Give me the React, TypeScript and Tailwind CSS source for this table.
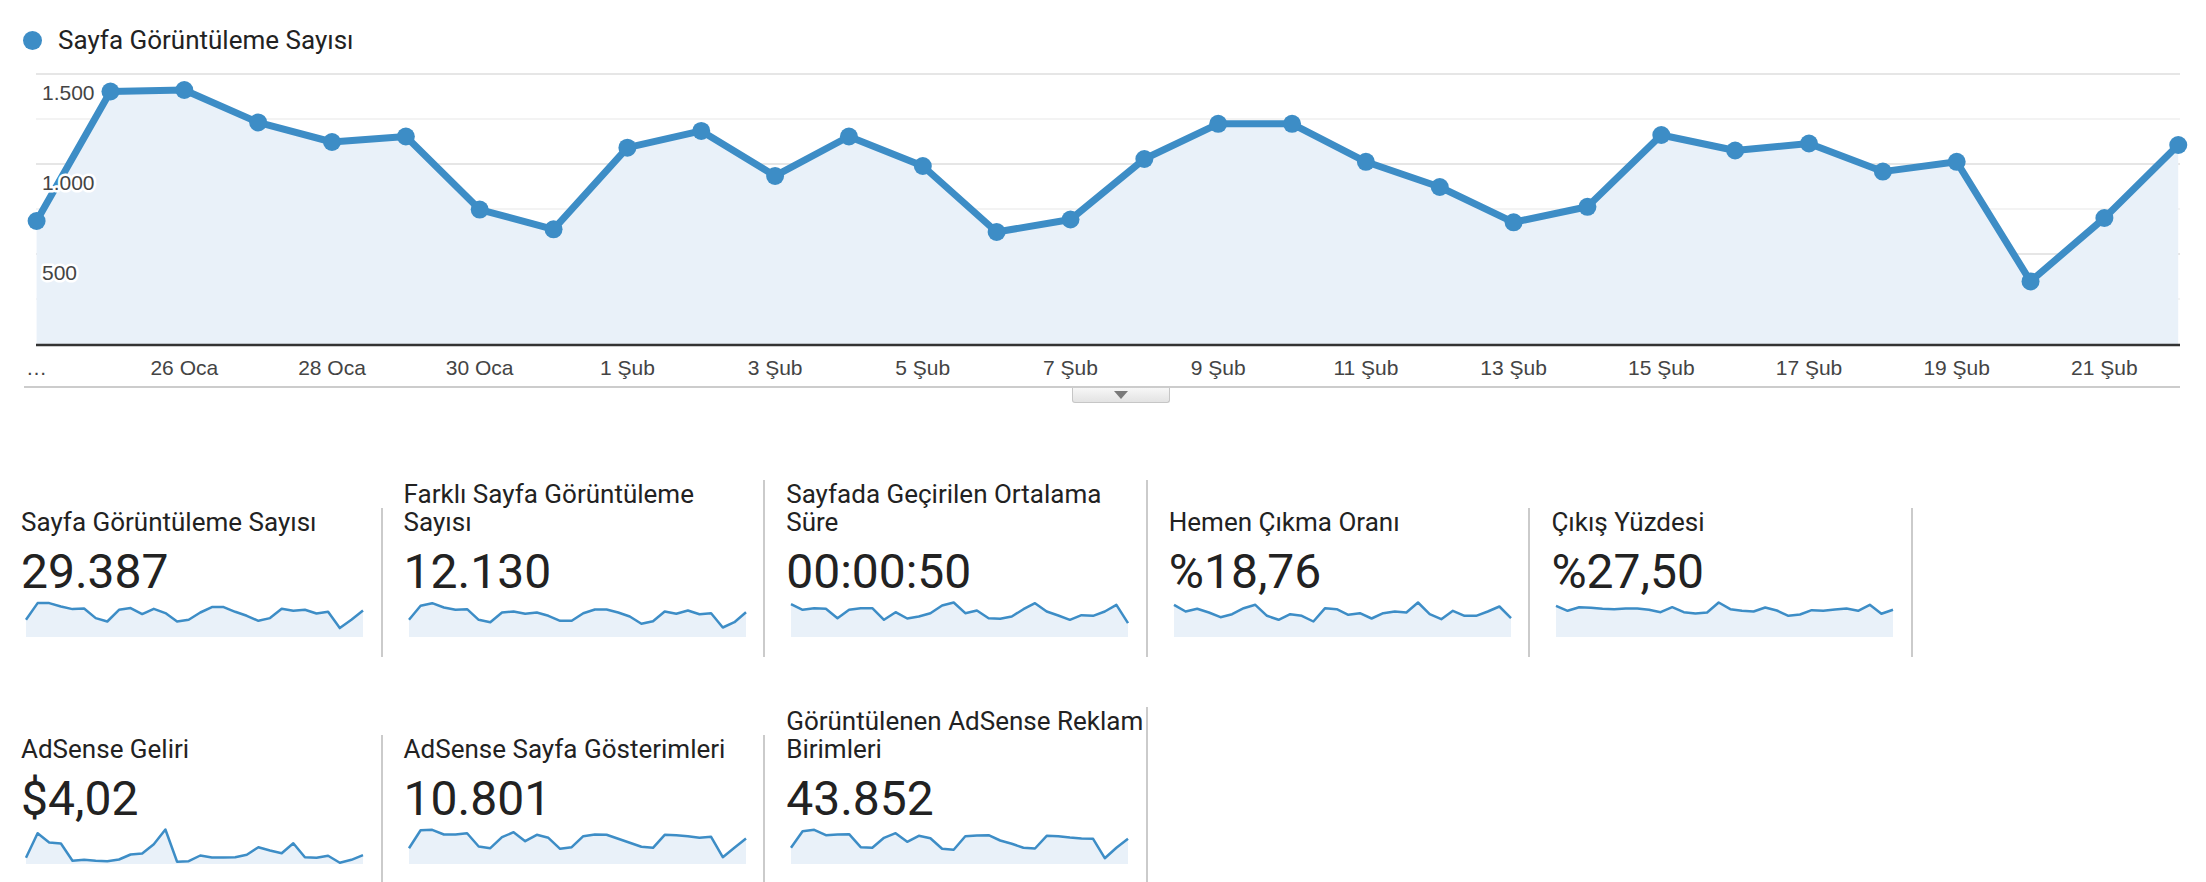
import React from 'react';

const BLUE = '#3d8dc6';
const FILL = '#e9f1f9';

// main chart geometry (page pixels)
const X0 = 36.6;
const DX = 73.85;
const BASE = 344;

const pageViews = [
  221, 91.5, 90, 122.4, 142, 136.5, 209.6, 229.3, 147.7, 130.9, 175.9, 136.5, 166, 232, 219.5,
  159, 123.8, 123.8, 161.8, 187, 222.3, 206.8, 135, 150.5, 143.5, 171.6, 161.8, 281.4, 218, 145,
];

const ticks = [
  '26 Oca', '28 Oca', '30 Oca', '1 Şub', '3 Şub', '5 Şub', '7 Şub',
  '9 Şub', '11 Şub', '13 Şub', '15 Şub', '17 Şub', '19 Şub', '21 Şub',
];

const yLabels = [
  { text: '1.500', y: 100 },
  { text: '1.000', y: 190 },
  { text: '500', y: 280 },
];

interface Metric {
  label: string;
  value: string;
  spark: number[];
}

const row1: Metric[] = [
  {
    label: 'Sayfa Görüntüleme Sayısı',
    value: '29.387',
    spark: [17.3, 0.6, 0.6, 4, 6.6, 6, 15.6, 19, 7.3, 5.6, 11.6, 6.3, 10.6, 19, 17.3, 10, 4.6, 4.6, 9.3, 13.3, 18.3, 15.6, 6.3, 8.3, 7.3, 11, 9.3, 25.6, 17.3, 8],
  },
  {
    label: 'Farklı Sayfa Görüntüleme Sayısı',
    value: '12.130',
    spark: [17.3, 3.3, 0.7, 5, 7.3, 6.7, 17.3, 19.7, 10, 9, 11.3, 10, 13.3, 18.3, 18.3, 10.7, 7, 7, 10, 14, 21.3, 18.7, 9, 11.3, 8, 11.7, 10.7, 25, 19.7, 9.7],
  },
  {
    label: 'Sayfada Geçirilen Ortalama Süre',
    value: '00:00:50',
    spark: [1.7, 7.3, 5.7, 6.3, 15.7, 7.3, 5.7, 5.7, 17.3, 9.7, 16, 14, 10.7, 3, 0, 10.7, 8, 15.7, 16.3, 14, 6.7, 0.7, 9, 13, 17.3, 12.7, 13.3, 9, 2.3, 20.7],
  },
  {
    label: 'Hemen Çıkma Oranı',
    value: '%18,76',
    spark: [2.3, 9, 6.3, 10, 14.7, 11.7, 5.7, 2.3, 13.3, 17.3, 11.7, 13.3, 19, 5.7, 6.7, 12.3, 10.7, 16, 10.7, 9, 10, 0, 11.7, 16.7, 8.3, 13.3, 13.3, 9, 4, 15.7],
  },
  {
    label: 'Çıkış Yüzdesi',
    value: '%27,50',
    spark: [3.3, 8.3, 4.7, 5.3, 6.3, 6.7, 6, 6, 7.3, 9.7, 4.7, 9.7, 11, 10, 0, 6.7, 8.3, 9, 5, 8, 13.3, 12, 7.7, 8.3, 7, 6, 8.3, 2.3, 11.3, 7.3],
  },
];

const row2: Metric[] = [
  {
    label: 'AdSense Geliri',
    value: '$4,02',
    spark: [28.3, 3.7, 13, 14, 31.3, 30.3, 31.3, 31.7, 30, 25, 24, 14.7, 0, 32.3, 31.7, 26, 28, 28, 27.7, 25.3, 17.7, 21, 23.7, 13.7, 27.7, 28.3, 26.3, 33.3, 30.3, 25.7],
  },
  {
    label: 'AdSense Sayfa Gösterimleri',
    value: '10.801',
    spark: [18.7, 0.7, 0.3, 5, 5, 3.7, 17, 18.7, 7.7, 2.7, 11.7, 5.3, 8.3, 19.3, 17.7, 6.7, 5, 5.3, 9.3, 13.3, 17.3, 18.3, 5.3, 5.7, 6.7, 8.3, 7.3, 27.7, 18.3, 9],
  },
  {
    label: 'Görüntülenen AdSense Reklam Birimleri',
    value: '43.852',
    spark: [18.3, 1.7, 0.3, 5.7, 5, 4.7, 17.7, 18.3, 8.3, 3.7, 12.3, 6.3, 8.7, 19.3, 20.3, 6.7, 6, 5.7, 11, 14.3, 18.3, 19, 6.3, 6.7, 8, 9, 9.3, 28.7, 18.3, 9.3],
  },
];

const Sparkline = ({ data }: { data: number[] }) => {
  const w = 337;
  const h = 36;
  const pts = data
    .map((d, i) => `${((i * w) / (data.length - 1)).toFixed(1)},${(d + 1.5).toFixed(1)}`)
    .join(' ');
  return (
    <svg width={w} height={h} viewBox={`0 0 ${w} ${h}`} className="block ml-[5px] mt-[3px] overflow-visible">
      <polygon points={`0,${h} ${pts} ${w},${h}`} fill={FILL} />
      <polyline points={pts} fill="none" stroke={BLUE} strokeWidth={2.5} strokeLinejoin="round" />
    </svg>
  );
};

const MetricCard = ({ metric }: { metric: Metric }) => (
  <div className="w-[382.6px] shrink-0 border-r-2 border-[#cbcbcb] pl-[21px] pb-[20px]">
    <div className="text-[26px] leading-[28px] text-[#222]">{metric.label}</div>
    <div className="mt-[10px] text-[48px] leading-[52px] text-[#222]">{metric.value}</div>
    <Sparkline data={metric.spark} />
  </div>
);

const MainChart = () => {
  const xAt = (i: number) => X0 + i * DX;
  const linePts = pageViews.map((y, i) => `${xAt(i).toFixed(1)},${y}`).join(' ');
  const areaPts = `${X0},${BASE} ${linePts} ${xAt(pageViews.length - 1).toFixed(1)},${BASE}`;

  return (
    <svg width={2206} height={326} viewBox="0 60 2206 326" className="block">
      {/* grid */}
      {[119, 209, 299].map((y) => (
        <line key={`m${y}`} x1={36} x2={2180} y1={y} y2={y} stroke="#f3f3f3" strokeWidth={2} />
      ))}
      {[74, 164, 254].map((y) => (
        <line key={`g${y}`} x1={36} x2={2180} y1={y} y2={y} stroke="#e6e6e6" strokeWidth={2} />
      ))}

      <polygon points={areaPts} fill={FILL} />
      <polyline points={linePts} fill="none" stroke={BLUE} strokeWidth={7} strokeLinejoin="round" />
      {pageViews.map((y, i) => (
        <circle key={i} cx={xAt(i)} cy={y} r={9} fill={BLUE} />
      ))}

      <line x1={36} x2={2180} y1={BASE + 1} y2={BASE + 1} stroke="#333" strokeWidth={2.5} />

      {yLabels.map((l) => (
        <text
          key={l.text}
          x={42}
          y={l.y}
          fontFamily="'Liberation Sans', Arial, sans-serif"
          fontSize={21}
          fill="#444"
          stroke="#fff"
          strokeWidth={5}
          strokeLinejoin="round"
          paintOrder="stroke"
        >
          {l.text}
        </text>
      ))}

      <text x={X0} y={374.5} textAnchor="middle" fontFamily="'Liberation Sans', Arial, sans-serif" fontSize={21} fill="#444">
        …
      </text>
      {ticks.map((t, k) => (
        <text
          key={t}
          x={xAt(2 + 2 * k)}
          y={374.5}
          textAnchor="middle"
          fontFamily="'Liberation Sans', Arial, sans-serif"
          fontSize={21}
          fill="#444"
        >
          {t}
        </text>
      ))}
    </svg>
  );
};

const App = () => {
  return (
    <div className="w-[2206px] h-[882px] overflow-hidden bg-white font-[Roboto,sans-serif] text-[#222]">
      {/* legend */}
      <div className="h-[60px] pt-[26px] pl-[23px]">
        <div className="flex items-center h-[28px] gap-[16px]">
          <span className="w-[19px] h-[19px] rounded-full bg-[#3d8dc6]" />
          <span className="text-[26px] leading-[28px] text-[#222]">Sayfa Görüntüleme Sayısı</span>
        </div>
      </div>

      <MainChart />

      <div className="ml-[24px] w-[2156px] h-[2px] bg-[#cccccc]" />
      <div className="ml-[1072px] w-[98px] h-[15px] border border-t-0 border-[#c6c6c6] rounded-b-[3px] bg-gradient-to-b from-[#f7f7f7] to-[#e3e3e3] flex justify-center pt-[3px]">
        <span className="w-0 h-0 border-x-[7px] border-x-transparent border-t-[8px] border-t-[#7a7a7a]" />
      </div>

      {/* metric cards */}
      <div className="mt-[77px] flex items-end">
        {row1.map((m) => (
          <MetricCard key={m.label} metric={m} />
        ))}
      </div>
      <div className="mt-[50px] flex items-end">
        {row2.map((m) => (
          <MetricCard key={m.label} metric={m} />
        ))}
      </div>
    </div>
  );
};

export default App;
